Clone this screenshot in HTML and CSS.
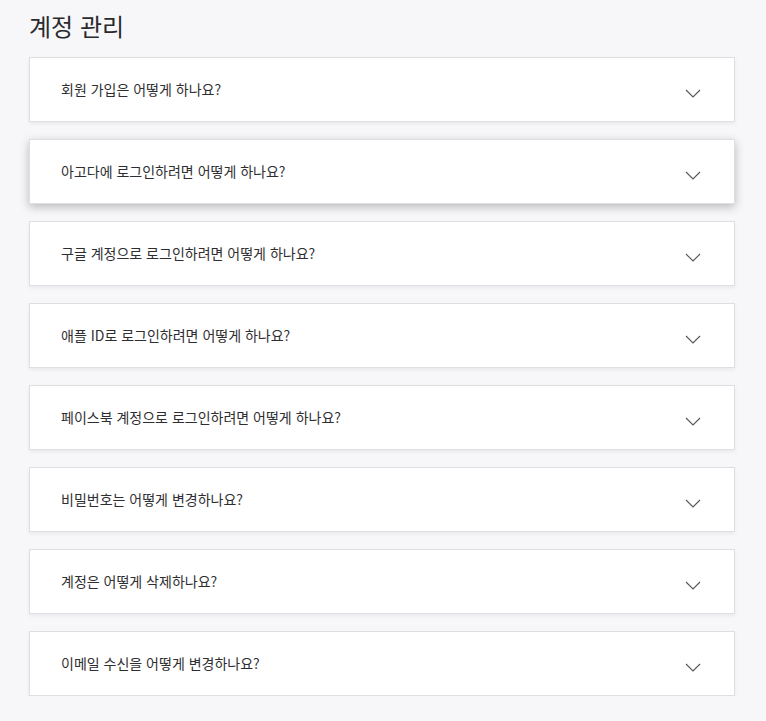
FILE: index.html
```html
<!DOCTYPE html>
<html lang="ko">
<head>
<meta charset="utf-8">
<link rel="stylesheet" href="styles.css">
</head>
<body>
<main class="faq">
  <h1 class="faq-title">계정 관리</h1>
  <div class="faq-list">
    <div class="faq-item"><span class="faq-q">회원 가입은 어떻게 하나요?</span><svg class="chev" viewBox="0 0 16 9"><path d="M1 1l7 7 7-7"/></svg></div>
    <div class="faq-item hover"><span class="faq-q">아고다에 로그인하려면 어떻게 하나요?</span><svg class="chev" viewBox="0 0 16 9"><path d="M1 1l7 7 7-7"/></svg></div>
    <div class="faq-item"><span class="faq-q">구글 계정으로 로그인하려면 어떻게 하나요?</span><svg class="chev" viewBox="0 0 16 9"><path d="M1 1l7 7 7-7"/></svg></div>
    <div class="faq-item"><span class="faq-q">애플 ID로 로그인하려면 어떻게 하나요?</span><svg class="chev" viewBox="0 0 16 9"><path d="M1 1l7 7 7-7"/></svg></div>
    <div class="faq-item"><span class="faq-q">페이스북 계정으로 로그인하려면 어떻게 하나요?</span><svg class="chev" viewBox="0 0 16 9"><path d="M1 1l7 7 7-7"/></svg></div>
    <div class="faq-item"><span class="faq-q">비밀번호는 어떻게 변경하나요?</span><svg class="chev" viewBox="0 0 16 9"><path d="M1 1l7 7 7-7"/></svg></div>
    <div class="faq-item"><span class="faq-q">계정은 어떻게 삭제하나요?</span><svg class="chev" viewBox="0 0 16 9"><path d="M1 1l7 7 7-7"/></svg></div>
    <div class="faq-item"><span class="faq-q">이메일 수신을 어떻게 변경하나요?</span><svg class="chev" viewBox="0 0 16 9"><path d="M1 1l7 7 7-7"/></svg></div>
  </div>
</main>
</body>
</html>
```
FILE: styles.css
```css
html, body {
  margin: 0;
  padding: 0;
  background: #f7f7f9;
}
body {
  font-family: "Noto Sans CJK KR", "Noto Sans", sans-serif;
  color: #2a2a2e;
}
.faq {
  padding: 8px 31px 0 29px;
}
.faq-title {
  margin: 0 0 13px 0;
  font-size: 24px;
  font-weight: 400;
  line-height: 36px;
  color: #2a2a2e;
}
.faq-list {
  display: flex;
  flex-direction: column;
  gap: 17px;
}
.faq-item {
  box-sizing: border-box;
  height: 65px;
  background: #fff;
  border: 1px solid #dddfe2;
  box-shadow: 0 2px 4px rgba(0,0,0,0.06);
  display: flex;
  align-items: center;
  justify-content: space-between;
  padding: 0 33px 2px 31px;
}
.faq-item.hover {
  box-shadow: 0 3px 9px rgba(0,0,0,0.25);
}
.faq-q {
  font-size: 14px;
  color: #2e2e30;
  line-height: 20px;
}
.chev {
  width: 16px;
  height: 9px;
  margin-top: 10px;
  fill: none;
  stroke: #555;
  stroke-width: 1.1;
}
```
